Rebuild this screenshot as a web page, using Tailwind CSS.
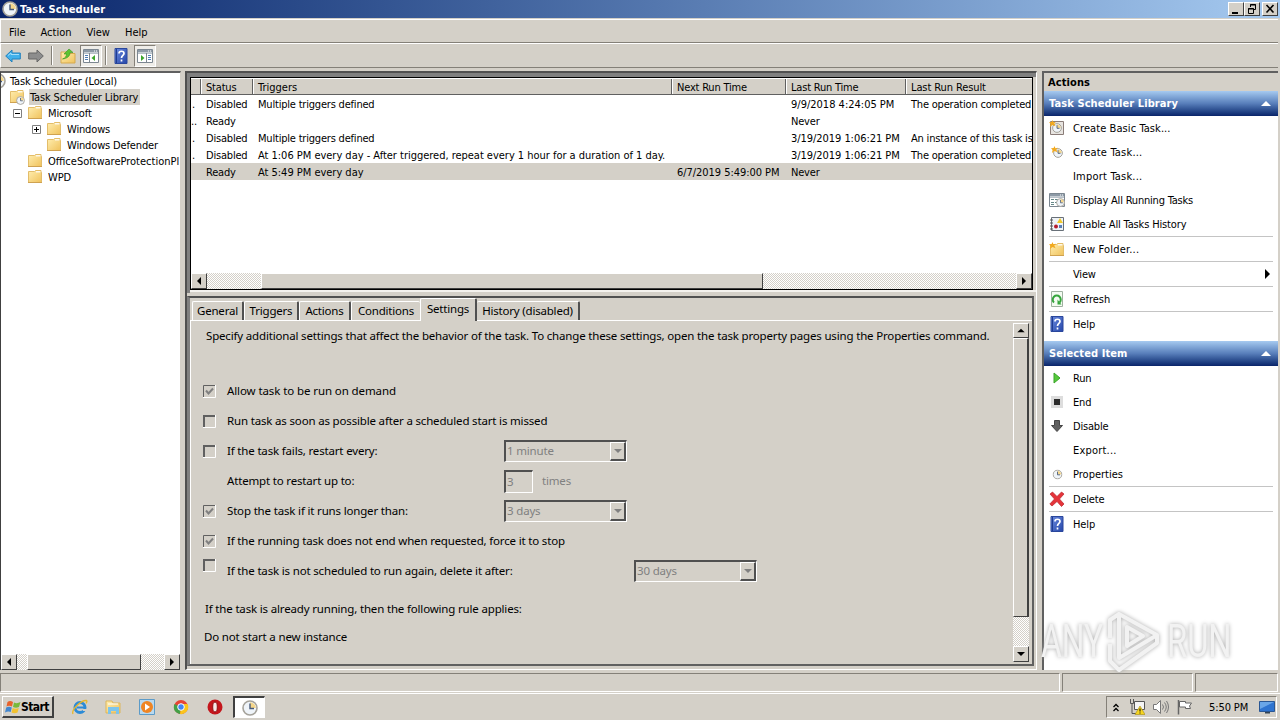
<!DOCTYPE html>
<html lang="en">
<head>
  <meta charset="utf-8">
  <title>Task Scheduler</title>
  <script src="https://cdn.jsdelivr.net/npm/@tailwindcss/browser@4"></script>
</head>
<body class="w-[1280px] h-[720px] overflow-hidden bg-[#d4d0c8] text-black text-[11px] leading-[16px] whitespace-nowrap font-['DejaVu_Sans_Condensed','DejaVu_Sans',sans-serif] font-stretch-condensed tracking-[-0.2px] flex flex-col">

<!-- Icon sprites -->
<svg class="absolute w-0 h-0" xmlns="http://www.w3.org/2000/svg">
  <linearGradient id="gold" x1="0" y1="0" x2="1" y2="1"><stop offset="0" stop-color="#ffeeb0"/><stop offset="1" stop-color="#f0c25c"/></linearGradient>
  <linearGradient id="navy" x1="0" y1="0" x2="1" y2="1"><stop offset="0" stop-color="#6c8be0"/><stop offset="1" stop-color="#2546a8"/></linearGradient>
  <symbol id="folder" viewBox="0 0 16 16">
    <path d="M1.500 2.500V13.500h13V3.500H14V1.500H8.500L7.500 2.500z" fill="url(#gold)" stroke="#e3bd6a"/>
    <path d="M9 2h4.500v1.500H9z" fill="#fff" opacity=".8"/><path d="M1 13.500h14" stroke="#cfa251"/>
  </symbol>
  <symbol id="clock" viewBox="0 0 16 16">
    <circle cx="8" cy="8" r="7" fill="#eff4f9" stroke="#a5a29a" stroke-width="1.600"/>
    <path d="M8 8V2.200A5.800 5.800 0 0 1 13.800 8z" fill="#f5d68a"/>
    <path d="M8 3.500V8.500h4" fill="none" stroke="#46597a" stroke-width="1.400"/>
  </symbol>
  <symbol id="help" viewBox="0 0 16 16">
    <path d="M2 .5h12v15H2z" fill="url(#navy)" stroke="#2a479c"/><path d="M3.500 1v14" stroke="#1f3c91"/>
    <path d="M6 5.500C6 2.500 11 2.500 11 5.500C11 7.500 8.500 7.500 8.500 10M8.500 11.500v2" fill="none" stroke="#fff" stroke-width="1.700"/>
  </symbol>
  <symbol id="pane" viewBox="0 0 16 16">
    <path d="M.5 1.500h15v13H.5z" fill="#fff" stroke="#7c8791"/><path d="M1 2h14v2.500H1z" fill="#8d9aa6"/><path d="M1 5.500h14" stroke="#b8c1c9"/>
    <path d="M11 3h1M13 3h1" stroke="#fff"/>
  </symbol>
  <symbol id="spark" viewBox="0 0 8 8">
    <path d="M4 0l1 2.500L8 2 6 4l1.500 3L4 5.700 1 8l.8-3.500L0 2.500l3-.2z" fill="#f2a91e"/>
  </symbol>
</svg>

<!-- Title bar -->
<header class="h-[19px] shrink-0 flex items-center bg-linear-to-r from-[#0a246a] to-[#a6caf0] border-b border-[#d4d0c8]">
  <svg class="ml-[2px] size-4"><use href="#clock"/></svg>
  <h1 class="ml-[2px] pt-[2px] text-white font-bold text-[11px] tracking-[0.1px]">Task Scheduler</h1>
  <div class="ml-auto mr-[2px] flex">
    <div class="w-4 h-[14px] bg-[#d4d0c8] border border-t-white border-l-white border-r-[#404040] border-b-[#404040]"><svg class="w-[14px] h-3" viewBox="0 0 14 12"><path d="M3 9h6v2H3z"/></svg></div>
    <div class="w-4 h-[14px] bg-[#d4d0c8] border border-t-white border-l-white border-r-[#404040] border-b-[#404040]"><svg class="w-[14px] h-3" viewBox="0 0 14 12" fill="none" stroke="#000"><path d="M5.500 4V1.500h5v5H8.500M5 2h6M3.500 5.500h5v5h-5zM3 6h6"/></svg></div>
    <div class="ml-[2px] w-4 h-[14px] bg-[#d4d0c8] border border-t-white border-l-white border-r-[#404040] border-b-[#404040]"><svg class="w-[14px] h-3" viewBox="0 0 14 12" stroke="#000" stroke-width="1.600"><path d="M3.500 2l7 7.500M10.500 2l-7 7.500"/></svg></div>
  </div>
</header>

<!-- Menu -->
<nav class="h-6 shrink-0 border-t border-l border-white border-b border-b-[#848078] mr-[2px] flex items-center pl-2 pt-[3px] gap-[15px] tracking-[0]">
  <span>File</span><span>Action</span><span>View</span><span>Help</span>
</nav>

<!-- Toolbar -->
<div class="h-[25px] shrink-0 border-t border-l border-white border-b border-b-[#848078] mr-[2px] flex items-center pl-1">
  <svg class="w-4 h-4" viewBox="0 0 16 16"><path d="M.7 8L7 2V5h8.300v6H7v3z" fill="#41b1ec" stroke="#2280bd"/><path d="M3 7.500L6 5v1.500h8" stroke="#a4defa" fill="none"/></svg>
  <svg class="ml-[7px] w-4 h-4" viewBox="0 0 16 16"><path d="M15.300 8L9 2V5H.7v6H9v3z" fill="#8d8d8d" stroke="#666"/></svg>
  <div class="ml-[7px] w-px h-[19px] bg-[#848078]"></div><div class="w-px h-[19px] bg-white"></div>
  <svg class="ml-[7px] w-4 h-4" viewBox="0 0 16 16"><path d="M1 4h6l1 1.500h7V15H1z" fill="url(#gold)" stroke="#d5a94f"/><path d="M2.500 11c3-1 4-3 4-5H4L9 1l4 3.500H10c0 4-3 6-7.500 6.500z" fill="#5cc331" stroke="#3b9320" stroke-width=".6"/></svg>
  <div class="ml-1 w-[22px] h-[22px] flex items-center justify-center bg-[#efede8] border border-t-[#848078] border-l-[#848078] border-r-white border-b-white">
    <svg class="size-4" viewBox="0 0 16 16"><use href="#pane"/><path d="M6.500 5v9" stroke="#7c8791"/><path d="M2 7.500h3M2 9.500h3M2 11.500h3" stroke="#4d7db5"/><path d="M12 7v6L8.500 10z" fill="#3ba52b"/></svg>
  </div>
  <div class="ml-[3px] w-px h-[19px] bg-[#848078]"></div><div class="w-px h-[19px] bg-white"></div>
  <svg class="ml-[6px] size-4"><use href="#help"/></svg>
  <div class="ml-[5px] w-[22px] h-[22px] flex items-center justify-center bg-[#efede8] border border-t-[#848078] border-l-[#848078] border-r-white border-b-white">
    <svg class="size-4" viewBox="0 0 16 16"><use href="#pane"/><path d="M9.500 5v9" stroke="#7c8791"/><path d="M11 7.500h3M11 9.500h3M11 11.500h3" stroke="#4d7db5"/><path d="M4 7v6L7.500 10z" fill="#3ba52b"/></svg>
  </div>
</div>

<!-- Workspace -->
<main class="mt-[3px] h-[600px] shrink-0 flex">

  <!-- Tree -->
  <aside class="w-[181px] h-[599px] bg-white border-l border-l-[#404040] border-t-2 border-t-[#606060] border-r border-r-[#d4d0c8] flex flex-col overflow-hidden">
    <ul class="flex-1 overflow-hidden tracking-[-0.15px]">
      <li class="h-4 flex items-center"><svg class="-ml-[11px] size-4"><use href="#clock"/></svg><span class="ml-1 pt-[2px]">Task Scheduler (Local)</span></li>
      <li class="h-4 flex items-center pl-2">
        <svg class="w-4 h-4" viewBox="0 0 16 16"><use href="#folder"/><use href="#clock" x="7" y="7" width="9" height="9"/></svg>
        <span class="ml-1 px-[1px] bg-[#d4d0c8] w-[111px] h-4 leading-[18px]">Task Scheduler Library</span>
      </li>
      <li class="h-4 flex items-center pl-3">
        <svg class="size-[9px]" viewBox="0 0 9 9"><path d="M.5.5h8v8h-8z" fill="#fff" stroke="#808080"/><path d="M2 4.500h5" stroke="#000"/></svg>
        <svg class="ml-[5px] size-4"><use href="#folder"/></svg><span class="ml-[5px] pt-[2px]">Microsoft</span>
      </li>
      <li class="h-4 flex items-center pl-[31px]">
        <svg class="size-[9px]" viewBox="0 0 9 9"><path d="M.5.5h8v8h-8z" fill="#fff" stroke="#808080"/><path d="M2 4.500h5M4.500 2v5" stroke="#000"/></svg>
        <svg class="ml-[5px] size-4"><use href="#folder"/></svg><span class="ml-[5px] pt-[2px]">Windows</span>
      </li>
      <li class="h-4 flex items-center pl-[45px]"><svg class="size-4"><use href="#folder"/></svg><span class="ml-[5px] pt-[2px]">Windows Defender</span></li>
      <li class="h-4 flex items-center pl-[26px]"><svg class="size-4 shrink-0"><use href="#folder"/></svg><span class="ml-[5px] pt-[2px] w-[131px] overflow-hidden tracking-[0]">OfficeSoftwareProtectionPl</span></li>
      <li class="h-4 flex items-center pl-[26px]"><svg class="size-4"><use href="#folder"/></svg><span class="ml-[5px] pt-[2px]">WPD</span></li>
    </ul>
    <div class="h-4 flex bg-[conic-gradient(#fff_25%,#d4d0c8_0_50%,#fff_0_75%,#d4d0c8_0)] bg-[length:2px_2px]">
      <div class="w-4 bg-[#d4d0c8] border border-t-white border-l-white border-r-[#404040] border-b-[#404040]"><svg class="size-[14px]" viewBox="0 0 14 14"><path d="M9 3v8L5 7z"/></svg></div>
      <div class="ml-[10px] w-[114px] bg-[#d4d0c8] border border-t-white border-l-white border-r-[#404040] border-b-[#404040]"></div>
      <div class="ml-auto w-4 bg-[#d4d0c8] border border-t-white border-l-white border-r-[#404040] border-b-[#404040]"><svg class="size-[14px]" viewBox="0 0 14 14"><path d="M5 3v8l4-4z"/></svg></div>
    </div>
  </aside>

  <!-- Task list and details -->
  <section class="ml-1 w-[852px] h-[599px] border-l-2 border-t-2 border-[#505050] border-r border-r-white border-b border-b-white flex flex-col">
    <div class="h-[220px] border-t-4 border-l-[3px] border-[#808080] bg-[#d4d0c8]">
      <div class="h-[213px] border border-black bg-white flex flex-col w-[843px]">
        <div class="h-[17px] flex bg-[#d4d0c8] border-t border-white border-b border-b-[#606060] leading-[17px] overflow-hidden">
          <div class="w-[10px] border-r border-[#606060]"></div>
          <div class="w-[52px] pl-1 border-l border-l-white border-r border-r-[#606060]">Status</div>
          <div class="w-[419px] pl-1 border-l border-l-white border-r border-r-[#606060] tracking-[0]">Triggers</div>
          <div class="w-[114px] pl-1 border-l border-l-white border-r border-r-[#606060]">Next Run Time</div>
          <div class="w-[120px] pl-1 border-l border-l-white border-r border-r-[#606060]">Last Run Time</div>
          <div class="flex-1 pl-1 border-l border-l-white tracking-[-0.1px]">Last Run Result</div>
        </div>
        <div class="flex-1 overflow-hidden leading-[19px]">
          <div class="h-[17px] grid grid-cols-[15px_52px_419px_114px_120px_121px] overflow-hidden"><span class="pl-[1px]">.</span><span>Disabled</span><span>Multiple triggers defined</span><span></span><span class="tracking-[0]">9/9/2018 4:24:05 PM</span><span>The operation completed</span></div>
          <div class="h-[17px] grid grid-cols-[15px_52px_419px_114px_120px_121px] overflow-hidden"><span>..</span><span>Ready</span><span></span><span></span><span>Never</span><span></span></div>
          <div class="h-[17px] grid grid-cols-[15px_52px_419px_114px_120px_121px] overflow-hidden"><span class="pl-[1px]">.</span><span>Disabled</span><span>Multiple triggers defined</span><span></span><span class="tracking-[-0.05px]">3/19/2019 1:06:21 PM</span><span class="overflow-hidden">An instance of this task is</span></div>
          <div class="h-[17px] grid grid-cols-[15px_52px_419px_114px_120px_121px] overflow-hidden"><span class="pl-[1px]">.</span><span>Disabled</span><span class="tracking-[-0.02px]">At 1:06 PM every day - After triggered, repeat every 1 hour for a duration of 1 day.</span><span></span><span class="tracking-[-0.05px]">3/19/2019 1:06:21 PM</span><span>The operation completed</span></div>
          <div class="h-[17px] grid grid-cols-[15px_52px_419px_114px_120px_121px] bg-[#d4d0c8] overflow-hidden"><span></span><span>Ready</span><span class="tracking-[-0.02px]">At 5:49 PM every day</span><span class="tracking-[-0.05px]">6/7/2019 5:49:00 PM</span><span>Never</span><span></span></div>
        </div>
        <div class="h-4 flex bg-[conic-gradient(#fff_25%,#d4d0c8_0_50%,#fff_0_75%,#d4d0c8_0)] bg-[length:2px_2px]">
          <div class="w-4 bg-[#d4d0c8] border border-t-white border-l-white border-r-[#404040] border-b-[#404040]"><svg class="size-[14px]" viewBox="0 0 14 14"><path d="M9 3v8L5 7z"/></svg></div>
          <div class="ml-[54px] w-[502px] bg-[#d4d0c8] border border-t-white border-l-white border-r-[#404040] border-b-[#404040]"></div>
          <div class="ml-auto w-4 bg-[#d4d0c8] border border-t-white border-l-white border-r-[#404040] border-b-[#404040]"><svg class="size-[14px]" viewBox="0 0 14 14"><path d="M5 3v8l4-4z"/></svg></div>
        </div>
      </div>
      <div class="h-[2px] bg-[#f4f2ee]"></div>
    </div>
    <div class="flex-1 bg-[#d4d0c8] border-l-[3px] border-l-[#808080] mt-[3px] border-t-2 border-t-[#505050] flex flex-col font-['Noto_Sans','Open_Sans',sans-serif] font-stretch-normal tracking-[-0.17px] mb-[3px] mr-[2px] border-r-2 border-r-[#606060] border-b-2 border-b-[#606060]">

      <!-- Tabs -->
      <div class="h-[23px] flex items-end pl-[2px] border-b border-white text-[11.5px] tracking-[-0.2px]">
        <div class="w-[52px] h-[19px] text-center border-t border-l border-white border-r-2 border-r-[#505050] rounded-t-[2px] leading-[18px]">General</div>
        <div class="w-[55px] h-[19px] text-center border-t border-l border-white border-r-2 border-r-[#505050] rounded-t-[2px] leading-[18px]">Triggers</div>
        <div class="w-[52px] h-[19px] text-center border-t border-l border-white border-r-2 border-r-[#505050] rounded-t-[2px] leading-[18px]">Actions</div>
        <div class="w-[69px] h-[19px] text-center border-t border-l border-white leading-[18px] rounded-t-[2px]">Conditions</div>
        <div class="w-[57px] h-[23px] -mb-px text-center bg-[#d4d0c8] border-t border-l border-white border-r-2 border-r-[#505050] rounded-t-[2px] leading-[20px]">Settings</div>
        <div class="w-[103px] h-[19px] text-center border-t border-white border-r-2 border-r-[#505050] rounded-t-[2px] leading-[18px]">History (disabled)</div>
      </div>

      <!-- Settings page -->
      <div class="flex-1 flex text-[11.5px] border-l border-l-white">
        <div class="w-[822px] pl-3">
          <p class="mt-[7px] pl-[3px] h-[48px]">Specify additional settings that affect the behavior of the task. To change these settings, open the task property pages using the Properties command.</p>
          <div class="h-[30px] flex items-center tracking-[-0.1px]">
            <svg class="size-[13px] mr-[11px]" viewBox="0 0 13 13"><path d="M0 12.500h12.500V0" fill="none" stroke="#fff"/><path d="M.5 12V.5H12" fill="none" stroke="#606060"/><path d="M3 5.500l2.500 3 4.500-5" fill="none" stroke="#808080" stroke-width="2"/></svg>Allow task to be run on demand
          </div>
          <div class="h-[30px] flex items-center">
            <svg class="size-[13px] mr-[11px]" viewBox="0 0 13 13"><path d="M0 12.500h12.500V0" fill="none" stroke="#fff"/><path d="M1 12V1H12" fill="none" stroke="#606060" stroke-width="2"/></svg>Run task as soon as possible after a scheduled start is missed
          </div>
          <div class="h-[30px] flex items-center">
            <svg class="size-[13px] mr-[11px]" viewBox="0 0 13 13"><path d="M0 12.500h12.500V0" fill="none" stroke="#fff"/><path d="M1 12V1H12" fill="none" stroke="#606060" stroke-width="2"/></svg><span class="w-[277px]">If the task fails, restart every:</span>
            <div class="w-[123px] h-[22px] flex pl-[1px] leading-[18px] text-[#808080] border-t-2 border-l-2 border-[#505050] border-r border-r-white border-b border-b-white"><span class="flex-1">1 minute</span><div class="w-4 border border-white border-r-2 border-r-[#505050] border-b-2 border-b-[#505050]"><svg class="w-[13px] h-4" viewBox="0 0 13 16"><path d="M3 6h8l-4 4z" fill="#808080"/></svg></div></div>
          </div>
          <div class="h-[30px] flex items-center pl-6">
            <span class="w-[277px]">Attempt to restart up to:</span>
            <div class="w-[29px] h-[23px] pl-[1px] leading-[19px] text-[#808080] border-t-2 border-l-2 border-[#505050] border-r border-r-white border-b border-b-white">3</div>
            <span class="ml-[9px] text-[#808080]">times</span>
          </div>
          <div class="h-[30px] flex items-center">
            <svg class="size-[13px] mr-[11px]" viewBox="0 0 13 13"><path d="M0 12.500h12.500V0" fill="none" stroke="#fff"/><path d="M.5 12V.5H12" fill="none" stroke="#606060"/><path d="M3 5.500l2.500 3 4.500-5" fill="none" stroke="#808080" stroke-width="2"/></svg><span class="w-[277px]">Stop the task if it runs longer than:</span>
            <div class="w-[123px] h-[22px] flex pl-[1px] leading-[18px] text-[#808080] border-t-2 border-l-2 border-[#505050] border-r border-r-white border-b border-b-white"><span class="flex-1">3 days</span><div class="w-4 border border-white border-r-2 border-r-[#505050] border-b-2 border-b-[#505050]"><svg class="w-[13px] h-4" viewBox="0 0 13 16"><path d="M3 6h8l-4 4z" fill="#808080"/></svg></div></div>
          </div>
          <div class="h-[30px] flex items-center">
            <svg class="size-[13px] mr-[11px]" viewBox="0 0 13 13"><path d="M0 12.500h12.500V0" fill="none" stroke="#fff"/><path d="M.5 12V.5H12" fill="none" stroke="#606060"/><path d="M3 5.500l2.500 3 4.500-5" fill="none" stroke="#808080" stroke-width="2"/></svg>If the running task does not end when requested, force it to stop
          </div>
          <div class="h-[30px] flex items-center">
            <svg class="size-[13px] mr-[11px] mb-3" viewBox="0 0 13 13"><path d="M0 12.500h12.500V0" fill="none" stroke="#fff"/><path d="M1 12V1H12" fill="none" stroke="#606060" stroke-width="2"/></svg><span class="w-[407px]">If the task is not scheduled to run again, delete it after:</span>
            <div class="w-[123px] h-[22px] flex pl-[1px] leading-[18px] text-[#808080] border-t-2 border-l-2 border-[#505050] border-r border-r-white border-b border-b-white"><span class="flex-1">30 days</span><div class="w-4 border border-white border-r-2 border-r-[#505050] border-b-2 border-b-[#505050]"><svg class="w-[13px] h-4" viewBox="0 0 13 16"><path d="M3 6h8l-4 4z" fill="#808080"/></svg></div></div>
          </div>
          <p class="mt-[15px] pl-[2px]">If the task is already running, then the following rule applies:</p>
          <p class="mt-3 pl-[1px]">Do not start a new instance</p>
        </div>
        <div class="mt-[2px] mb-[2px] w-4 flex flex-col bg-[conic-gradient(#fff_25%,#d4d0c8_0_50%,#fff_0_75%,#d4d0c8_0)] bg-[length:2px_2px]">
          <div class="h-[15px] bg-[#d4d0c8] border border-t-white border-l-white border-r-[#404040] border-b-[#404040]"><svg class="w-[14px] h-[13px]" viewBox="0 0 14 14"><path d="M3 9h8L7 5z"/></svg></div>
          <div class="h-[279px] bg-[#d4d0c8] border border-t-white border-l-white border-r-2 border-r-[#404040] border-b-[#404040]"></div>
          <div class="mt-auto h-4 bg-[#d4d0c8] border border-t-white border-l-white border-r-[#404040] border-b-[#404040]"><svg class="size-[14px]" viewBox="0 0 14 14"><path d="M3 5h8L7 9z"/></svg></div>
        </div>
      </div>
    </div>
  </section>

  <!-- Actions pane -->
  <aside class="relative ml-[5px] w-[236px] h-[599px] bg-white border-l-2 border-l-[#606060] border-t-2 border-t-[#606060]">
    <h2 class="h-[18px] pl-1 bg-[#d4d0c8] font-bold leading-[19px] tracking-[0.1px]">Actions</h2>
    <div class="h-[25px] flex items-center justify-between pl-[5px] pr-[7px] bg-linear-to-b from-[#a6caf0] via-[#587eba] to-[#0a246a] text-white font-bold tracking-[0.1px]"><span class="pt-px">Task Scheduler Library</span><svg class="w-[10px] h-[5px]" viewBox="0 0 10 5"><path d="M0 5h10L5 0z" fill="#fff"/></svg></div>
    <ul class="pl-[5px]">
      <li class="h-6 flex items-center"><svg class="size-4 mr-2" viewBox="0 0 16 16"><path d="M1.500 1.500h13v13h-13z" fill="#e7e4e0" stroke="#8a7c78"/><use href="#clock" x="3" y="3" width="10" height="10"/><use href="#spark" width="7" height="7"/></svg><span class="pt-[2px] tracking-[0.08px]">Create Basic Task...</span></li>
      <li class="h-6 flex items-center"><svg class="size-4 mr-2" viewBox="0 0 16 16"><use href="#clock" x="4" y="4" width="10" height="10"/><use href="#spark" x="2" y="2" width="7" height="7"/></svg><span class="pt-[2px] tracking-[0.2px]">Create Task...</span></li>
      <li class="h-6 flex items-center pl-6"><span class="pt-[2px] tracking-[0.2px]">Import Task...</span></li>
      <li class="h-6 flex items-center"><svg class="size-4 mr-2" viewBox="0 0 16 16"><use href="#pane"/><path d="M2 7.500h3M2 10.500h3M2 12.500h3M6 7.500h3M6 10.500h2" stroke="#688"/><use href="#clock" x="7" y="6" width="9" height="9"/></svg><span class="pt-[2px]">Display All Running Tasks</span></li>
      <li class="h-6 flex items-center"><svg class="size-4 mr-2" viewBox="0 0 16 16"><path d="M2.500 1.500h12v13h-12z" fill="#eef2f6" stroke="#687078"/><path d="M1 4h3M1 7h3M1 10h3M1 13h3" stroke="#555"/><path d="M11 2l3 5H8z" fill="#f1c928"/><circle cx="7" cy="10.500" r="2" fill="#b51d2d"/><path d="M10 9h3v3h-3z" fill="#5a80b5"/></svg><span class="pt-[2px] tracking-[-0.15px]">Enable All Tasks History</span></li>
      <li class="h-px mr-[5px] bg-[#c4c4c4]"></li>
      <li class="h-6 flex items-center"><svg class="size-4 mr-2" viewBox="0 0 16 16"><use href="#folder" y="1"/><use href="#spark" y="1" width="7" height="7"/></svg><span class="pt-[2px] tracking-[0.2px]">New Folder...</span></li>
      <li class="h-px mr-[5px] bg-[#c4c4c4]"></li>
      <li class="h-6 flex items-center justify-between pl-6 pr-2"><span class="pt-[2px]">View</span><svg class="w-[5px] h-[10px]" viewBox="0 0 5 10"><path d="M0 0v10l5-5z"/></svg></li>
      <li class="h-px mr-[5px] bg-[#c4c4c4]"></li>
      <li class="h-6 flex items-center"><svg class="size-4 mr-2" viewBox="0 0 16 16"><path d="M2.500.5h11v15h-11z" fill="#f4fbf2" stroke="#9fb0a0"/><path d="M5 11.500a4 4 0 1 1 5.500 0" fill="none" stroke="#35a53c" stroke-width="2"/><path d="M8.500 8.500v5h4z" fill="#35a53c"/></svg><span class="pt-[2px] tracking-[0]">Refresh</span></li>
      <li class="h-px mr-[5px] bg-[#c4c4c4]"></li>
      <li class="h-6 flex items-center"><svg class="size-4 mr-2"><use href="#help"/></svg><span class="pt-[2px] tracking-[-0.1px]">Help</span></li>
    </ul>
    <div class="mt-[5px] h-[25px] flex items-center justify-between pl-[5px] pr-[7px] bg-linear-to-b from-[#a6caf0] via-[#587eba] to-[#0a246a] text-white font-bold tracking-[0.1px]"><span class="pt-px">Selected Item</span><svg class="w-[10px] h-[5px]" viewBox="0 0 10 5"><path d="M0 5h10L5 0z" fill="#fff"/></svg></div>
    <ul class="pl-[5px]">
      <li class="h-6 flex items-center"><svg class="size-4 mr-2" viewBox="0 0 16 16"><path d="M5 3l6 5-6 5z" fill="#55c93b" stroke="#3aa52a"/></svg><span class="pt-[2px]">Run</span></li>
      <li class="h-6 flex items-center"><svg class="size-4 mr-2" viewBox="0 0 16 16"><path d="M2 2h12v12H2z" fill="#ddd"/><path d="M5 5h6v6H5z" fill="#2d2d2d"/></svg><span class="pt-[2px]">End</span></li>
      <li class="h-6 flex items-center"><svg class="size-4 mr-2" viewBox="0 0 16 16"><path d="M5.500 2.500h5v5h3L8 13.500 2.500 7.500h3z" fill="#606060" stroke="#454545"/></svg><span class="pt-[2px]">Disable</span></li>
      <li class="h-6 flex items-center pl-6"><span class="pt-[2px] tracking-[0.2px]">Export...</span></li>
      <li class="h-6 flex items-center"><svg class="size-4 mr-2" viewBox="0 0 16 16"><use href="#clock" x="3.500" y="3.500" width="10" height="10"/></svg><span class="pt-[2px] tracking-[0]">Properties</span></li>
      <li class="h-px mr-[5px] bg-[#c4c4c4]"></li>
      <li class="h-6 flex items-center"><svg class="size-4 mr-2" viewBox="0 0 16 16"><path d="M1 3l2.500-2L8 5.500 12.500 1 15 3l-4.500 5 4.500 5-2.500 2.500L8 10.500 3 15 .8 13 5.500 8z" fill="#e5343a" stroke="#b8242b" stroke-width=".7"/></svg><span class="pt-[2px]">Delete</span></li>
      <li class="h-px mr-[5px] bg-[#c4c4c4]"></li>
      <li class="h-6 flex items-center"><svg class="size-4 mr-2"><use href="#help"/></svg><span class="pt-[2px] tracking-[-0.1px]">Help</span></li>
    </ul>

    <!-- Watermark over the pane -->
    <div class="absolute left-[-3px] top-[534px] w-[200px] h-[68px] flex items-center text-[#f2f2f2] text-[46px] leading-none font-['Roboto','Liberation_Sans',sans-serif] font-stretch-normal tracking-normal drop-shadow-[0_0_2px_#aaa]">
      <span class="w-[64px] origin-left scale-x-[0.69]">ANY</span>
      <svg class="w-[56px] h-[64px] shrink-0" viewBox="0 0 56 64" fill="none" stroke="#f2f2f2" stroke-width="4" stroke-linejoin="round"><path d="M14 5v44l38-23zM14 5L5 11v18M5 35v17l9 9 38-27v-8M22 18v19l16-10z"/></svg>
      <span class="ml-[6px] origin-left scale-x-[0.71]">RUN</span>
    </div>
  </aside>
</main>

<!-- Status bar -->
<footer class="h-[21px] shrink-0 mt-[1px] flex gap-[2px] pt-[1px]">
  <div class="w-[1060px] h-[19px] border border-t-[#848078] border-l-[#848078] border-r-white border-b-white"></div>
  <div class="w-[131px] h-[19px] border border-t-[#848078] border-l-[#848078] border-r-white border-b-white"></div>
  <div class="w-[83px] h-[19px] border border-t-[#848078] border-l-[#848078] border-r-white border-b-white"></div>
</footer>

<!-- Taskbar -->
<div class="flex-1 border-t border-white flex items-center pl-[2px]">
  <div class="w-[52px] h-[22px] flex items-center pl-[2px] border border-t-white border-l-white border-r-2 border-r-[#404040] border-b-2 border-b-[#404040] font-bold">
    <svg class="size-4" viewBox="0 0 16 16"><path d="M2.500 3Q5 1 8 3L7 7.500Q4 6 1.500 7.500z" fill="#e8622b"/><path d="M9 3.500Q12 5 15.500 3L14 8Q11 9.500 8 8z" fill="#78b939"/><path d="M1.200 8.500Q4 7 6.800 8.500L5.700 13Q3 12 0 13.500z" fill="#4287cf"/><path d="M7.700 9Q10.500 10.500 13.800 9L12.500 13.500Q9.500 15 6.500 13.500z" fill="#f2c230"/></svg>
    <span class="text-[12px] tracking-[-0.6px]">Start</span>
  </div>
  <svg class="ml-[18px] size-4" viewBox="0 0 16 16"><circle cx="8" cy="8.500" r="5" fill="none" stroke="#2c8bd6" stroke-width="3"/><path d="M5 8.500h8" stroke="#2c8bd6" stroke-width="2"/><path d="M11 11h5" stroke="#d4d0c8" stroke-width="2"/><path d="M1 15C-1 11 9 1 14.500 1.500c1 .5 0 2-.5 3" fill="none" stroke="#e7b72d" stroke-width="1.300"/></svg>
  <svg class="ml-[17px] size-4" viewBox="0 0 16 16"><path d="M1 2h6l1 2h7v10H1z" fill="url(#gold)" stroke="#dcb65d"/><path d="M3 8h11v7h-3v-3H6v3H3z" fill="#7cc4ec"/><path d="M3 5h10" stroke="#fff"/></svg>
  <svg class="ml-[18px] size-4" viewBox="0 0 16 16"><path d="M.5.5h15v15H.5z" fill="#b9d9ef" stroke="#5c9bc8"/><circle cx="8" cy="8" r="6" fill="#ef8524"/><path d="M6 4.500l5 3.500-5 3.500z" fill="#fff"/></svg>
  <svg class="ml-[18px] size-4" viewBox="0 0 16 16"><circle cx="8" cy="8" r="7" fill="#e64435"/><path d="M8 8L1.500 5A7 7 0 0 0 7 15z" fill="#43a047"/><path d="M8 8l-1 7a7 7 0 0 0 7.500-10H8z" fill="#fbc51b"/><circle cx="8" cy="8" r="3.300" fill="#4285f4" stroke="#fff"/></svg>
  <svg class="ml-[18px] size-4" viewBox="0 0 16 16"><circle cx="8" cy="8" r="7.500" fill="#c4161c"/><ellipse cx="8" cy="8" rx="2.300" ry="5" fill="#f6e9e7" stroke="#8d1014"/></svg>
  <div class="ml-[10px] w-8 h-[22px] flex items-center justify-center bg-white border-t-2 border-l-2 border-[#404040] border-r border-r-white border-b border-b-white"><svg class="size-4"><use href="#clock"/></svg></div>
  <div class="ml-auto mr-[3px] w-[171px] h-[22px] flex items-center border border-t-[#848078] border-l-[#848078] border-r-white border-b-white">
    <svg class="ml-[6px] w-[6px] h-[9px]" viewBox="0 0 6 9" fill="none" stroke="#000" stroke-width="1.300"><path d="M.5 4L3 1.500 5.500 4M.5 8L3 5.500 5.500 8"/></svg>
    <svg class="ml-[10px] size-4" viewBox="0 0 16 16"><path d="M5.500 2.500h10v8h-10z" fill="#f4f4f4" stroke="#555"/><path d="M1.500 0v4.500h3V0M3 4.500v10h4" fill="none" stroke="#555"/><path d="M11 7l5 8.500H6z" fill="#f7d520" stroke="#a58b10" stroke-width=".6"/><path d="M11 9.500v3M11 13.500v1" stroke="#000"/></svg>
    <svg class="ml-2 size-4" viewBox="0 0 16 16" fill="none" stroke="#777"><path d="M.5 5.500h3l4-4v13l-4-4h-3z" fill="#fff"/><path d="M9.500 5.500q2 2.500 0 5M11.500 3.500q3.500 4.500 0 9M13.500 2q4 6 0 12"/></svg>
    <svg class="ml-2 size-4" viewBox="0 0 16 16"><path d="M1.500 1v14.500" stroke="#666" stroke-width="1.500"/><path d="M2.500 2.500h6v1.500h6l-2 3 1 2.500h-5V8h-6z" fill="#fff" stroke="#666"/></svg>
    <span class="ml-4 pt-[2px] tracking-[-0.1px]">5:50 PM</span>
    <svg class="ml-auto mr-px size-4" viewBox="0 0 16 16"><path d="M.5 2.500h15v10H.5z" fill="#2f74d0" stroke="#2a5794"/><path d="M1 3h14L1 10z" fill="#6aa6e8"/><path d="M6 13h5v1.500H6z" fill="#345"/></svg>
  </div>
</div>
</body>
</html>
